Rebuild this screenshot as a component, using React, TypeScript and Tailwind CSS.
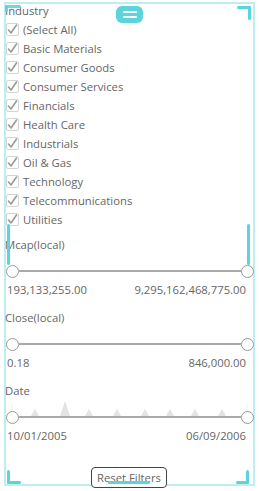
import React from "react";

const sectors = [
  "(Select All)",
  "Basic Materials",
  "Consumer Goods",
  "Consumer Services",
  "Financials",
  "Health Care",
  "Industrials",
  "Oil & Gas",
  "Technology",
  "Telecommunications",
  "Utilities",
];

const CheckRow: React.FC<{ label: string }> = ({ label }) => (
  <div className="flex items-center h-[19px]">
    <div className="ml-[1px] w-[13px] h-[13px] border border-[#d4d4d4] rounded-[2px] flex items-center justify-center bg-white">
      <svg width="11" height="11" viewBox="0 0 11 11">
        <polyline
          points="1.5,6 4,9 9.5,1"
          fill="none"
          stroke="#999"
          strokeWidth="1.6"
          strokeLinecap="round"
          strokeLinejoin="round"
        />
      </svg>
    </div>
    <span className="ml-[4px] text-[11.3px] text-[#666] leading-none">{label}</span>
  </div>
);

const Thumb = () => (
  <div className="w-[13px] h-[13px] rounded-full border-[1.5px] border-[#999] bg-white shrink-0 z-10" />
);

const RangeSlider: React.FC<{ spark?: boolean }> = ({ spark }) => (
  <div className="relative h-[20px] flex items-center pl-[1px] pr-[1px]">
    {spark && (
      <svg
        className="absolute left-0 top-0 overflow-visible"
        width="250"
        height="20"
        viewBox="0 0 250 20"
      >
        <line x1="7" y1="-4" x2="7" y2="8" stroke="#eee" strokeWidth="1" />
        <line x1="242" y1="-4" x2="242" y2="8" stroke="#eee" strokeWidth="1" />
        <polygon points="26,9 30,2 34,9" fill="#e3e3e3" />
        <polygon points="55,9 60,-6 65,9" fill="#e3e3e3" />
        <polygon points="80,9 84,2 88,9" fill="#e3e3e3" />
        <polygon points="108,9 112,2 116,9" fill="#e3e3e3" />
        <polygon points="136,9 140,2 144,9" fill="#e3e3e3" />
        <polygon points="161,9 165,2 169,9" fill="#e3e3e3" />
        <polygon points="186,9 190,2 194,9" fill="#e3e3e3" />
        <polygon points="213,9 217,2 221,9" fill="#e3e3e3" />
      </svg>
    )}
    <Thumb />
    <div className="flex-1 h-[2px] bg-[#aaa]" />
    <Thumb />
  </div>
);

const Range: React.FC<{
  label: string;
  min: string;
  max: string;
  spark?: boolean;
  className?: string;
}> = ({ label, min, max, spark, className }) => (
  <div className={className}>
    <div className="h-[18px] flex items-center text-[11.3px] text-[#666]">{label}</div>
    <div className="mt-[7px]">
      <RangeSlider spark={spark} />
    </div>
    <div className="h-[18px] flex items-center justify-between pl-[2px] pr-[9px] text-[11.3px] text-[#666]">
      <span>{min}</span>
      <span>{max}</span>
    </div>
  </div>
);

export default function App() {
  return (
    <div
      className="relative w-[259px] h-[491px] bg-white overflow-hidden"
      style={{ fontFamily: '"Open Sans", "Liberation Sans", sans-serif' }}
    >
      {/* frame */}
      <div className="absolute left-[4px] top-[2px] w-[251px] h-[484px] border-2 border-[#bdeff1] pointer-events-none" />

      <div className="relative flex flex-col pl-[5px] pr-[4px] pt-[3px]">
        <div className="h-[17px] flex items-center text-[11.3px] text-[#666]">Industry</div>
        {sectors.map((s) => (
          <CheckRow key={s} label={s} />
        ))}

        <Range
          className="mt-[7px]"
          label="Mcap(local)"
          min="193,133,255.00"
          max="9,295,162,468,775.00"
        />
        <Range
          className="mt-[10px]"
          label="Close(local)"
          min="0.18"
          max="846,000.00"
        />
        <Range
          className="mt-[10px]"
          label="Date"
          min="10/01/2005"
          max="06/09/2006"
          spark
        />

        <div className="flex justify-center mt-[22px] pr-[2px]">
          <button className="h-[21px] px-[5px] border-[1.5px] border-[#444] rounded-[4px] bg-white text-[11.3px] text-[#666] leading-none">
            Reset Filters
          </button>
        </div>
      </div>

      {/* handle */}
      <div className="absolute left-[116px] top-[6px] w-[27px] h-[17px] rounded-[6px] bg-[#5cd4db] flex flex-col items-center justify-center gap-[3px]">
        <div className="w-[14px] h-[2px] bg-white rounded" />
        <div className="w-[14px] h-[2px] bg-white rounded" />
      </div>

      {/* corner marks */}
      <div className="absolute left-[5px] top-[5px] w-[16px] h-[3px] bg-[#5cd4db] rounded-sm opacity-90" />
      <div className="absolute left-[5px] top-[5px] w-[3px] h-[7px] bg-[#5cd4db] rounded-sm opacity-90" />
      <div className="absolute left-[237px] top-[6px] w-[14px] h-[3px] bg-[#5cd4db] rounded-sm" />
      <div className="absolute left-[248px] top-[6px] w-[3px] h-[14px] bg-[#5cd4db] rounded-sm" />
      <div className="absolute left-[7px] top-[470px] w-[3px] h-[14px] bg-[#5cd4db] rounded-sm" />
      <div className="absolute left-[7px] top-[481px] w-[14px] h-[3px] bg-[#5cd4db] rounded-sm" />
      <div className="absolute left-[246px] top-[470px] w-[3px] h-[14px] bg-[#5cd4db] rounded-sm" />
      <div className="absolute left-[236px] top-[481px] w-[13px] h-[3px] bg-[#5cd4db] rounded-sm" />

      {/* side and bottom bars */}
      <div className="absolute left-[7px] top-[224px] w-[3px] h-[41px] bg-[#5cd4db] rounded-sm" />
      <div className="absolute left-[247px] top-[224px] w-[3px] h-[41px] bg-[#5cd4db] rounded-sm" />
      <div className="absolute left-[108px] top-[481px] w-[42px] h-[3px] bg-[#5cd4db] rounded-sm" />
    </div>
  );
}
